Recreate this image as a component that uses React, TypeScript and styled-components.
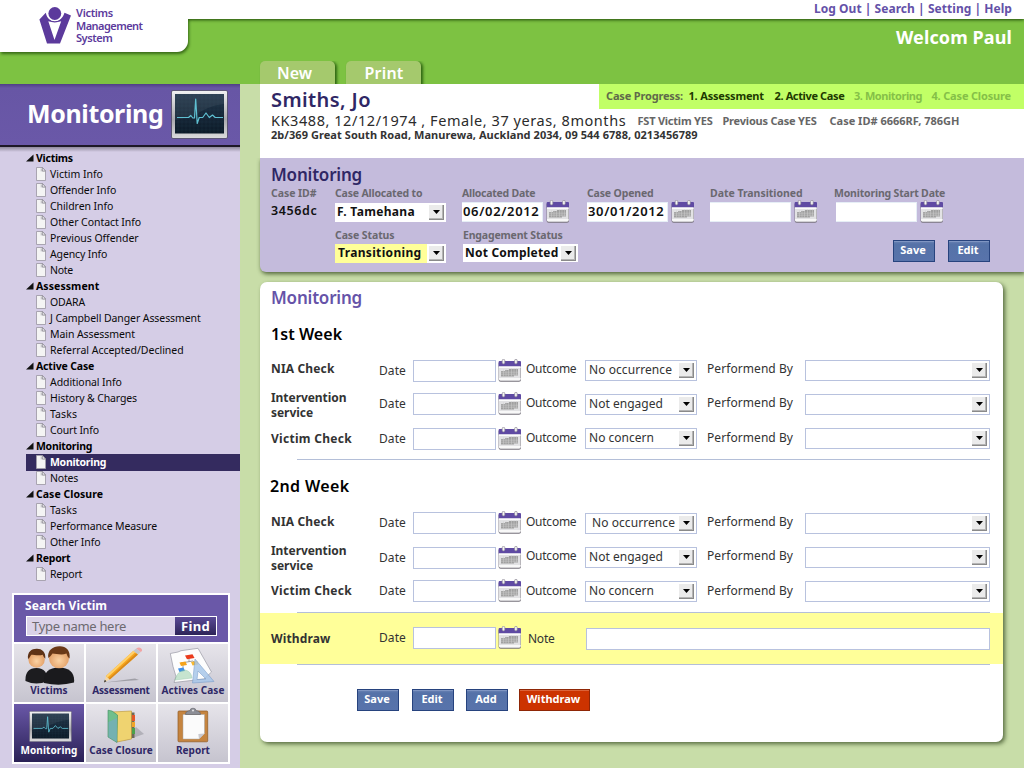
import React from 'react';
import styled, { createGlobalStyle, css } from 'styled-components';

const GlobalStyle = createGlobalStyle`
  * { box-sizing: border-box; }
  body { margin: 0; }
  body, input, button { font-family: "Noto Sans", "Open Sans", sans-serif; }
  p, h1, h2, h3, ul { margin: 0; padding: 0; }
`;

type Spaced = { $ls?: number };
const spacing = css<Spaced>`
  letter-spacing: ${(p) => p.$ls ?? 0}px;
  white-space: nowrap;
`;

/* ---------- page frame ---------- */

const Page = styled.div`
  width: 1024px;
  height: 768px;
  overflow: hidden;
  background: #c8dda8;
  display: flex;
  flex-direction: column;
`;

const Header = styled.header`
  height: 84px;
  flex: none;
  display: flex;
  background: #7dc242;
`;

const LogoPanel = styled.div`
  width: 188px;
  height: 52px;
  background: #fff;
  border-bottom-right-radius: 11px;
  box-shadow: 1px 2px 3px rgba(20, 60, 0, 0.65);
  padding: 7px 0 0 39px;
  display: flex;
  gap: 4px;
`;

const LogoText = styled.div`
  color: #5c3a9c;
  font-size: 11px;
  font-weight: 600;
  line-height: 12.6px;
  display: flex;
  flex-direction: column;
  padding-left: 1px;
`;

const Line = styled.span<Spaced>`
  ${spacing}
`;

const HeaderMain = styled.div`
  flex: 1;
  display: flex;
  flex-direction: column;
`;

const TopLinks = styled.nav`
  height: 19px;
  background: #fff;
  box-shadow: 0 1px 3px rgba(20, 60, 0, 0.9);
  clip-path: inset(0 0 -6px 0);
  color: #6451a8;
  font-size: 12px;
  font-weight: 700;
  line-height: 17px;
  letter-spacing: 0.04px;
  text-align: right;
  padding-right: 12px;
  white-space: pre;
`;

const Welcome = styled.div`
  height: 42px;
  line-height: 37px;
  padding-right: 12px;
  text-align: right;
  color: #fff;
  font-size: 18px;
  font-weight: 700;
  letter-spacing: 0.1px;
`;

const Tabs = styled.div`
  display: flex;
  gap: 11px;
  padding-left: 72px;
  height: 23px;
  overflow: hidden;
`;

const Tab = styled.div<Spaced & { $pad: number }>`
  width: 75px;
  height: 26px;
  padding-left: ${(p) => p.$pad}px;
  background: #a5c96d;
  border-radius: 5px 5px 0 0;
  box-shadow: 2px 1px 3px rgba(20, 70, 0, 0.75);
  color: #fff;
  font-size: 16px;
  font-weight: 600;
  line-height: 24px;
  ${spacing}
`;

const Body = styled.div`
  flex: 1;
  display: flex;
  min-height: 0;
`;

/* ---------- sidebar ---------- */

const Sidebar = styled.aside`
  width: 240px;
  flex: none;
  background: #d5cde6;
  display: flex;
  flex-direction: column;
`;

const Banner = styled.div`
  height: 63px;
  display: flex;
  justify-content: space-between;
  padding: 6px 12px 0 27px;
  border-bottom: 2px solid #1d1826;
  background: linear-gradient(#4f3f86 0, #6756a5 4px, #6a58a8 100%);
`;

const BannerTitle = styled.h1`
  color: #fff;
  font-size: 25px;
  font-weight: 700;
  line-height: 46px;
  letter-spacing: -0.38px;
`;

const Nav = styled.nav`
  padding: 3px 0 0 26px;
  flex: 1;
  background: linear-gradient(#8f899c 0, #d5cde6 5px);
`;

const NavHead = styled.div<Spaced>`
  height: 16px;
  display: flex;
  align-items: center;
  gap: 2px;
  font-size: 10.5px;
  font-weight: 700;
  line-height: 16px;
  color: #000;
  ${spacing}
`;

const NavItem = styled.div<Spaced & { $active?: boolean }>`
  height: 16px;
  padding-left: 10px;
  display: flex;
  align-items: center;
  gap: 4px;
  font-size: 10.5px;
  line-height: 16px;
  font-weight: ${(p) => (p.$active ? 700 : 400)};
  color: ${(p) => (p.$active ? '#fff' : '#0a0a0a')};
  box-shadow: ${(p) => (p.$active ? '0 1px 0 #342b5f' : 'none')};
  background: ${(p) => (p.$active ? '#342b5f' : 'transparent')};
  ${spacing}
`;

const Dock = styled.section`
  width: 218px;
  height: 171px;
  margin: 0 0 4px 12px;
  padding: 2px;
  background: #fff;
  display: grid;
  grid-template-columns: repeat(3, 70px);
  grid-template-rows: 47px 58px 58px;
  gap: 2px;
`;

const SearchPanel = styled.div`
  grid-column: 1 / -1;
  background: #6a58a8;
  padding: 3px 11px 0 11px;
`;

const SearchTitle = styled.div`
  color: #fff;
  font-size: 12px;
  font-weight: 700;
  line-height: 15px;
  height: 18px;
  letter-spacing: 0.06px;
`;

const SearchBox = styled.div`
  display: flex;
  height: 20px;
  border: 1px solid #fff;
  background: #dbd3e9;
  margin-left: 1px;
`;

const SearchHint = styled.span`
  flex: 1;
  padding-left: 5px;
  color: #6d6a70;
  font-size: 13px;
  line-height: 18px;
  letter-spacing: -0.31px;
`;

const FindButton = styled.span`
  width: 41px;
  padding-left: 6px;
  background: linear-gradient(#5a4a96, #2d2458);
  color: #fff;
  font-size: 13px;
  font-weight: 700;
  line-height: 19px;
  letter-spacing: 0.33px;
`;

const DockCell = styled.div<{ $active?: boolean }>`
  display: flex;
  flex-direction: column;
  background: ${(p) => (p.$active ? 'linear-gradient(#6a58a8, #2a2156)' : 'linear-gradient(#e6e4ea, #c6c4cf)')};
  color: ${(p) => (p.$active ? '#fff' : '#2f2866')};
`;

const DockLabel = styled.span<Spaced>`
  margin-top: -1px;
  font-size: 10px;
  font-weight: 700;
  line-height: 12px;
  text-align: center;
  ${spacing}
`;

/* ---------- main column ---------- */

const Main = styled.main`
  flex: 1;
  min-width: 0;
  padding-left: 20px;
  display: flex;
  flex-direction: column;
`;

const Client = styled.section`
  height: 74px;
  background: #fff;
  padding-left: 11px;
`;

const ClientTop = styled.div`
  display: flex;
  justify-content: space-between;
  height: 28px;
`;

const ClientName = styled.h2`
  margin-top: 4px;
  color: #2f2765;
  font-size: 20px;
  font-weight: 600;
  line-height: 24px;
  letter-spacing: 0.4px;
`;

const Progress = styled.div`
  width: 425px;
  height: 25px;
  display: grid;
  grid-template-columns: 82.5px 86px 79.5px 77.5px auto;
  padding-left: 7px;
  background: #c1ff66;
  font-size: 11px;
  font-weight: 700;
  line-height: 24px;
`;

const Step = styled.span<Spaced & { $tone: 'label' | 'done' | 'todo' }>`
  color: ${(p) => ({ label: '#5f6a4a', done: '#1d3a00', todo: '#85bf48' }[p.$tone])};
  ${spacing}
`;

const ClientFacts = styled.div`
  display: flex;
  height: 16px;
  line-height: 16px;
`;

const FactMain = styled.span`
  width: 366.5px;
  font-size: 14.5px;
  color: #2b2b2b;
  letter-spacing: 0.56px;
  white-space: pre;
`;

const Fact = styled.span<Spaced & { $w: number }>`
  width: ${(p) => p.$w}px;
  font-size: 11px;
  font-weight: 700;
  line-height: 18px;
  color: #666;
  ${spacing}
`;

const Address = styled.div`
  font-size: 11px;
  font-weight: 700;
  line-height: 14px;
  color: #333;
  letter-spacing: 0.06px;
  white-space: nowrap;
`;

const CasePanel = styled.section`
  height: 114px;
  flex: none;
  padding: 8px 0 0 11px;
  background: #c4bbdc;
  border-bottom-left-radius: 6px;
  box-shadow: 1px 2px 4px rgba(50, 70, 30, 0.8);
  clip-path: inset(0 0 -8px -8px);
`;

const PanelTitle = styled.h2<{ $color: string }>`
  color: ${(p) => p.$color};
  font-size: 17px;
  font-weight: 600;
  line-height: 18px;
  letter-spacing: -0.2px;
`;

const CaseRow = styled.div`
  display: grid;
  grid-template-columns: 64px 127px 125px 123px 124px 1fr;
  height: 42px;
  margin-top: 2px;
  & + & { margin-top: 0; }
`;

const CaseActions = styled.div`
  grid-column: 4 / -1;
  justify-self: end;
  display: flex;
  gap: 13px;
  padding: 12px 34px 0 0;
`;

const Field = styled.div<{ $shift?: number }>`
  padding-left: ${(p) => p.$shift ?? 0}px;
`;

const FieldLabel = styled.div<Spaced>`
  height: 16px;
  font-size: 10.5px;
  font-weight: 700;
  line-height: 14px;
  color: #6a6870;
  ${spacing}
`;

const CaseId = styled.div`
  font-size: 12.5px;
  font-weight: 600;
  line-height: 17px;
  letter-spacing: 0.6px;
  color: #111;
`;

const DateBox = styled.div<{ $indent?: number }>`
  display: flex;
  gap: 3px;
  padding-left: ${(p) => p.$indent ?? 0}px;
`;

const DateValue = styled.div`
  width: 81px;
  height: 20px;
  padding-left: 1px;
  background: #fff;
  border: 1px solid #e6eef6;
  border-left-width: 0;
  font-size: 13px;
  font-weight: 600;
  line-height: 17px;
  letter-spacing: 0.66px;
  white-space: nowrap;
  color: #111;
`;

const CaseSelect = styled.div<Spaced & { $w: number; $bg?: string; $top?: number; $pad?: number; $h?: number }>`
  width: ${(p) => p.$w}px;
  height: ${(p) => p.$h ?? 19}px;
  margin-top: ${(p) => p.$top ?? 0}px;
  padding: 0 2px 0 ${(p) => p.$pad ?? 2}px;
  display: flex;
  justify-content: space-between;
  align-items: center;
  background: linear-gradient(90deg, ${(p) => p.$bg ?? '#fff'} 92px, #fff 92px);
  font-size: 12px;
  font-weight: 700;
  line-height: 16px;
  color: #111;
  ${spacing}
  & > span:first-child { margin-top: -1px; }
`;

const ArrowBox = styled.span`
  width: 15px;
  height: 15px;
  flex: none;
  display: flex;
  align-items: center;
  justify-content: center;
  background: #ebebeb;
  border: solid #8a8a8a;
  border-width: 0 1px 1px 0;
  box-shadow: inset -1px -1px 0 #b5b5b5;
`;

const Button = styled.button<Spaced & { $w?: number; $danger?: boolean }>`
  width: ${(p) => p.$w ?? 42}px;
  height: 22px;
  padding: 0 2px 2px 0;
  border: 1px solid ${(p) => (p.$danger ? '#8f2606' : '#27437e')};
  background: ${(p) => (p.$danger ? '#cc3300' : 'linear-gradient(#6c84b5, #5572a8 3px, #5873ab)')};
  box-shadow: inset 0 1px 0 ${(p) => (p.$danger ? '#dc6238' : '#7f95c2')};
  color: #fff;
  font-size: 11px;
  font-weight: 700;
  line-height: 18px;
  ${spacing}
`;

/* ---------- monitoring card ---------- */

const Card = styled.section`
  width: 743px;
  height: 460px;
  margin-top: 10px;
  padding-top: 6px;
  background: #fff;
  border-radius: 7px;
  box-shadow: 2px 2px 4px rgba(50, 70, 30, 0.75);
`;

const CardTitle = styled(PanelTitle)`
  padding-left: 11px;
  line-height: 19px;
`;

const WeekTitle = styled.h3<Spaced & { $left?: number; $gap?: number }>`
  margin: ${(p) => p.$gap ?? 17}px 0 16px;
  padding-left: ${(p) => p.$left ?? 11}px;
  height: 19px;
  font-size: 16px;
  font-weight: 600;
  line-height: 19px;
  color: #000;
  ${spacing}
`;

const CheckRow = styled.div<{ $h: number }>`
  height: ${(p) => p.$h}px;
  padding-left: 11px;
  display: grid;
  grid-template-columns: 108px 34px 85px 28px 59px 122px 98px 185px;
  align-items: start;
`;

const WithdrawRow = styled(CheckRow)`
  padding-top: 14px;
  grid-template-columns: 108px 34px 85px 30px 58px 404px;
  background: #ffff99;
`;

const Divider = styled.hr`
  width: 693px;
  height: 1px;
  margin: 0 0 0 37px;
  border: 0;
  background: #b4bfd8;
`;

const RowLabel = styled.div<Spaced & { $cy?: number; $lift?: number }>`
  margin-top: ${(p) => -(p.$lift ?? 0)}px;
  font-size: 12px;
  font-weight: 700;
  line-height: ${(p) => (p.$cy ? p.$cy * 2 : 15)}px;
  color: #333;
  display: flex;
  flex-direction: column;
  ${spacing}
`;

const CellText = styled.span<Spaced & { $cy: number }>`
  font-size: 12px;
  line-height: ${(p) => p.$cy * 2}px;
  height: 22px;
  color: #333;
  ${spacing}
`;

const TextBox = styled.div<{ $w: number; $top?: number }>`
  width: ${(p) => p.$w}px;
  height: 22px;
  margin-top: ${(p) => p.$top ?? 0}px;
  border: 1px solid #b8c2de;
  background: #fff;
`;

const Select = styled.div<Spaced & { $w: number; $top?: number; $cy?: number; $pad?: number }>`
  width: ${(p) => p.$w}px;
  height: 21px;
  margin-top: ${(p) => p.$top ?? 0}px;
  padding: 0 2px 2px ${(p) => p.$pad ?? 3}px;
  display: flex;
  justify-content: space-between;
  align-items: flex-end;
  border: 1px solid #b8c2de;
  background: #fff;
  font-size: 12px;
  color: #333;
  ${spacing}
  & > span:first-child {
    align-self: flex-start;
    line-height: ${(p) => ((p.$cy ?? 9) - 1) * 2}px;
  }
`;

const CardActions = styled.div`
  display: flex;
  padding: 24px 0 0 97px;
  & > :nth-child(2) { margin-left: 13px; }
  & > :nth-child(3) { margin-left: 12px; }
  & > :nth-child(4) { margin-left: 11px; }
`;

/* ---------- drawings ---------- */

const CalendarSvg = styled.svg<{ $lift?: number }>`
  display: block;
  flex: none;
  margin-top: ${(p) => -(p.$lift ?? 1)}px;
`;

const Calendar = ({ lift }: { lift?: number }) => (
  <CalendarSvg $lift={lift} width="24" height="24" viewBox="0 0.6 24 24">
    <rect x="0.6" y="3" width="22.4" height="20.4" rx="2" fill="#77737c" />
    <rect x="1" y="3" width="21.6" height="19" rx="1.6" fill="#e2e2e4" />
    <path d="M1 19.500h21.600v1q0 1.600-1.600 1.600H2.600Q1 22.100 1 20.500z" fill="#f8f8f8" />
    <path d="M.6 3.500q0-1 1-1h20.400q1 0 1 1V8H.6z" fill="#5f4aa3" />
    <rect x="1" y="8" width="21.600" height="1.600" fill="#fbfbfb" />
    <path d="M3 12.500h4v-.8h4v-1h9v6.500h-4v1H3z" fill="#a0a0a0" />
    <path d="M3 13.800h17M3 15.800h17M5.500 11v7M8 11v7M10.500 11v7M13.500 10v8M16 10v7M18.500 10v7" stroke="#cfcfcf" strokeWidth=".5" />
    <rect x="4.200" y=".9" width="2.600" height="4.600" rx="1.300" fill="#f4f4f4" stroke="#8b8694" strokeWidth=".7" />
    <rect x="16.600" y=".9" width="2.600" height="4.600" rx="1.300" fill="#f4f4f4" stroke="#8b8694" strokeWidth=".7" />
  </CalendarSvg>
);

const Arrow = () => (
  <ArrowBox>
    <svg width="7" height="4" viewBox="0 0 7 4"><path d="M0 0h7L3.500 4z" fill="#000" /></svg>
  </ArrowBox>
);

const Logo = () => (
  <svg width="32" height="37" viewBox="0 0 32 37">
    <path d="M.4 12.400 6.800 5.800C8 11.500 11 14 15.800 14S23.600 11.500 25.500 5.800L32 8.400 21 36.600H8z" fill="#5c3a9c" />
    <circle cx="15.800" cy="6.600" r="7.600" fill="#fff" />
    <circle cx="15.800" cy="6.500" r="6.400" fill="#5c3a9c" />
    <path d="M9.300 14.300q6.500 2.200 12.900 0L15.500 33z" fill="#fff" />
  </svg>
);

const Monitor = ({ w, h }: { w: number; h: number }) => (
  <svg width={w} height={h} viewBox="0 0 57 49" preserveAspectRatio="none">
    <defs>
      <linearGradient id="bezel" x2="0" y2="1"><stop stopColor="#f2f2f2" /><stop offset=".6" stopColor="#a9a9ad" /><stop offset="1" stopColor="#dcdcde" /></linearGradient>
      <linearGradient id="screen" x2="0" y2="1"><stop stopColor="#22364a" /><stop offset="1" stopColor="#0c1a28" /></linearGradient>
    </defs>
    <rect x=".5" y=".5" width="56" height="48" rx="1.500" fill="url(#bezel)" stroke="#4a4562" strokeWidth=".8" />
    <rect x="4" y="4" width="49" height="39.500" fill="url(#screen)" />
    <path d="M7 4v39M11 4v39M15 4v39M19 4v39M23 4v39M27 4v39M31 4v39M35 4v39M39 4v39M43 4v39M47 4v39M51 4v39M4 8h49M4 12h49M4 16h49M4 20h49M4 24h49M4 28h49M4 32h49M4 36h49M4 40h49" stroke="#3b5b70" strokeWidth=".3" opacity=".4" />
    <path d="M4 4h49v10Q35 16 22 27L4 30z" fill="#fff" opacity=".06" />
    <path d="M6 27.500h11.500l2.300-2 2 2.500h1.700L24.700 9l1.500 24.500 2-6h3.500L35 23l3.300 4.500 3.200-2.500 2.700 2.500H52" fill="none" stroke="#5fc0d2" strokeWidth="1.200" strokeLinejoin="round" />
  </svg>
);

const FileIcon = () => (
  <svg width="10" height="14" viewBox="0 0 10 14">
    <path d="M.5.5h6l3 3.500v9.500h-9z" fill="#f4f4f4" stroke="#a19daa" strokeWidth=".9" />
    <path d="M4.500 1v3.500H9z" fill="#d2d2d5" />
    <path d="M6.300.5V4h3.200z" fill="#fff" stroke="#85828b" strokeWidth=".8" />
  </svg>
);

const Corner = () => (
  <svg width="8" height="8" viewBox="0 0 8 8"><path d="M7.500.5v7H0z" fill="#111" /></svg>
);

const Art = styled.svg`
  display: block;
  width: 70px;
  height: 41px;
  flex: none;
`;

const PeopleArt = () => (
  <Art viewBox="0 0 70 41">
    <defs>
      <radialGradient id="skin" cx=".5" cy=".6"><stop stopColor="#fbd3a4" /><stop offset="1" stopColor="#e3a169" /></radialGradient>
    </defs>
    <path d="M11.500 37c-.5-8 3-13 11-13s11 5 11 13q-11 5-22 0z" fill="#1c1c1f" />
    <ellipse cx="22.600" cy="15.500" rx="8.200" ry="8.300" fill="url(#skin)" />
    <path d="M14 15C13 7.500 18 4.500 23 4.700c5 0 9 3.300 8.300 10-1.500-1-2-3-2.500-4-4 1.500-9 0-11.500 0-1 1.300-1.700 3.300-3.300 4.300z" fill="#5d3216" />
    <path d="M30 39c-1-9.500 4-15.500 15-15.500S61 29.500 60 38.500q-14 4-30 .5z" fill="#1a1a1d" />
    <ellipse cx="45" cy="14.500" rx="10" ry="9.800" fill="url(#skin)" />
    <path d="M34.300 14C33 6 39.500 2 46 2.300c6 0 10.500 4 9.600 12.200-1.800-1-2.600-3.500-3.100-5-5 2-10.500 0-14 0-1.200 1.500-2.400 3.500-4.200 4.500z" fill="#6a3917" />
  </Art>
);

const PencilArt = () => (
  <Art viewBox="0 0 70 41">
    <path d="M19 38.500 53 36l-4-1.500z" fill="#77767c" opacity=".55" />
    <path d="M18 38.500l2-6.500 3.800 3.500z" fill="#f3d7a6" />
    <path d="M18 38.500l.8-2.700 1.600 1.500z" fill="#222" />
    <path d="M20 32 47.500 6.800l4.500 3.700-28.200 25z" fill="#f6a51c" />
    <path d="M20 32 47.500 6.800l1.700 1.400L21.500 33.500z" fill="#ffd069" />
    <path d="M22.700 34.500 50.500 9.300l1.500 1.200-28.200 25z" fill="#d98a1c" />
    <path d="M47.500 6.800l2.700-2.400 4.500 3.700-2.700 2.400z" fill="#c3c7cd" />
    <path d="M50.200 4.400q2.800-2 5 0 2 2-.5 3.700z" fill="#f1a4a4" />
  </Art>
);

const PlansArt = () => (
  <Art viewBox="0 0 70 41">
    <path d="M12.300 9.500 20 8l3-1.300L40 4.300 53.500 28 46 35l-30 3.500 2-6-3-10z" fill="#fdfdfd" stroke="#9a9aa5" strokeWidth=".7" />
    <path d="M31 14v4M23 19l12-2 3 3M25 24v-4" stroke="#8a8a8a" fill="none" strokeWidth=".8" />
    <path d="M27 11.500l7.500-1.300 2 3.800-7.500 1.300z" fill="#ea3b1c" />
    <path d="M21.500 18.500l6-1 1.500 3.500-6 1z" fill="#f5a31a" />
    <path d="M33 18l6-1 1.500 3.500-6 1z" fill="#f7b930" />
    <path d="M20 24.500l5.500-1 1.500 3.500-5.500 1z" fill="#3f8fe8" />
    <path d="M17 36q2-9 10-10 6 1 7 8z" fill="#a9d8b8" opacity=".65" stroke="#73b58b" strokeWidth=".5" />
    <path d="M37 15 56 37.500 34.500 39zM40 27l-1 8.500 9-.5z" fill="#a9c7ea" fillRule="evenodd" opacity=".85" stroke="#6d95c8" strokeWidth=".6" />
  </Art>
);

const FolderArt = () => (
  <Art viewBox="0 0 70 41">
    <path d="M38 37l20-7-8-7z" fill="#6f6f78" opacity=".35" />
    <path d="M44 8.500h4.500V34H44z" fill="#6b6b5b" />
    <path d="M46 11h3v6h-3z" fill="#e4572a" /><path d="M46 18h3v5h-3z" fill="#f0a52a" /><path d="M46 24h3v6h-3z" fill="#4ba14b" />
    <path d="M26 8 45.500 7v28L31 38z" fill="#efd370" stroke="#b99432" strokeWidth=".6" />
    <path d="M22 6.200 26 7l5.500 4L31 38.500l-9-5.500z" fill="#6fbf8c" stroke="#3d8b62" strokeWidth=".6" />
    <path d="M22.500 18 31 14v24l-8.500-5z" fill="#78a9c9" opacity=".6" />
  </Art>
);

const ClipboardArt = () => (
  <Art viewBox="0 0 70 41">
    <rect x="20" y="7" width="29.700" height="30.800" rx="1" fill="#c5843f" stroke="#8f5a23" strokeWidth=".7" />
    <path d="M25 10.500h21.500v19L41 35H25z" fill="#fbfbfb" stroke="#a5a5a5" strokeWidth=".5" />
    <path d="M46.500 29.500 41 35l-.7-5z" fill="#c9c9cf" />
    <path d="M27.500 10.500q0-3.500 4.500-3.800 0-2.500 3-2.500t3 2.500q4.500.3 4.500 3.800z" fill="#8c8e96" stroke="#5e6068" strokeWidth=".6" />
    <circle cx="35" cy="6.600" r="1" fill="#e5e5e8" />
  </Art>
);

const MonitorArtBox = styled.div`
  height: 41px;
  padding: 7px 0 0 15px;
`;

/* ---------- data ---------- */

type NavEntry = { head?: boolean; text: string; ls: number; active?: boolean };
const navEntries: NavEntry[] = [
  { head: true, text: 'Victims', ls: -0.25 },
  { text: 'Victim Info', ls: -0.02 },
  { text: 'Offender Info', ls: -0.08 },
  { text: 'Children Info', ls: -0.08 },
  { text: 'Other Contact Info', ls: -0.06 },
  { text: 'Previous Offender', ls: -0.05 },
  { text: 'Agency Info', ls: -0.14 },
  { text: 'Note', ls: -0.3 },
  { head: true, text: 'Assessment', ls: 0.08 },
  { text: 'ODARA', ls: -0.1 },
  { text: 'J Campbell Danger Assessment', ls: -0.09 },
  { text: 'Main Assessment', ls: -0.08 },
  { text: 'Referral Accepted/Declined', ls: -0.01 },
  { head: true, text: 'Active Case', ls: -0.16 },
  { text: 'Additional Info', ls: -0.08 },
  { text: 'History & Charges', ls: -0.13 },
  { text: 'Tasks', ls: 0.1 },
  { text: 'Court Info', ls: -0.15 },
  { head: true, text: 'Monitoring', ls: -0.28 },
  { text: 'Monitoring', ls: -0.28, active: true },
  { text: 'Notes', ls: -0.2 },
  { head: true, text: 'Case Closure', ls: 0.04 },
  { text: 'Tasks', ls: 0.1 },
  { text: 'Performance Measure', ls: -0.14 },
  { text: 'Other Info', ls: -0.1 },
  { head: true, text: 'Report', ls: -0.2 },
  { text: 'Report', ls: -0.22 },
];

type Check = {
  label: string[]; labelLs: number; labelCy?: number; labelLift?: number;
  h: number; dateCy: number; outcomeCy: number;
  outcome: string; outcomeLs: number; selectTop: number; selectCy: number; selectPad?: number;
};

const week1: Check[] = [
  { label: ['NIA Check'], labelLs: 0.15, labelCy: 9, h: 33, dateCy: 11, outcomeCy: 9, outcome: 'No occurrence', outcomeLs: 0.07, selectTop: 0, selectCy: 9.5 },
  { label: ['Intervention', 'service'], labelLs: -0.05, labelLift: 3, h: 35, dateCy: 10.5, outcomeCy: 10, outcome: 'Not engaged', outcomeLs: 0.03, selectTop: 1, selectCy: 9.5 },
  { label: ['Victim Check'], labelLs: 0.29, labelCy: 10.5, h: 31, dateCy: 10.5, outcomeCy: 10, outcome: 'No concern', outcomeLs: 0.02, selectTop: 0, selectCy: 10 },
];
const week2: Check[] = [
  { label: ['NIA Check'], labelLs: 0.15, labelCy: 10, h: 35, dateCy: 11, outcomeCy: 10, outcome: 'No occurrence', outcomeLs: 0.07, selectTop: 1, selectCy: 9.5, selectPad: 6 },
  { label: ['Intervention', 'service'], labelLs: -0.05, labelLift: 4, h: 33, dateCy: 11, outcomeCy: 9, outcome: 'Not engaged', outcomeLs: 0.03, selectTop: 0, selectCy: 9.5 },
  { label: ['Victim Check'], labelLs: 0.29, labelCy: 11, h: 32, dateCy: 11, outcomeCy: 11, outcome: 'No concern', outcomeLs: 0.02, selectTop: 1, selectCy: 10 },
];

const Checks = ({ rows }: { rows: Check[] }) => (
  <>
    {rows.map((r) => (
      <CheckRow key={r.label[0]} $h={r.h}>
        <RowLabel $ls={r.labelLs} $cy={r.labelCy} $lift={r.labelLift}>
          {r.label.map((l) => <span key={l}>{l}</span>)}
        </RowLabel>
        <CellText $cy={r.dateCy} $ls={0.1}>Date</CellText>
        <TextBox $w={83} />
        <Calendar />
        <CellText $cy={r.outcomeCy} $ls={-0.25}>Outcome</CellText>
        <Select $w={112} $top={r.selectTop} $cy={r.selectCy} $pad={r.selectPad} $ls={r.outcomeLs}>
          <span>{r.outcome}</span><Arrow />
        </Select>
        <CellText $cy={r.outcomeCy} $ls={0.07}>Performend By</CellText>
        <Select $w={185} $top={r.selectTop}><span /><Arrow /></Select>
      </CheckRow>
    ))}
  </>
);

const DateField = ({ label, ls, value, indent }: { label: string; ls: number; value?: string; indent?: number }) => (
  <Field>
    <FieldLabel $ls={ls}>{label}</FieldLabel>
    <DateBox $indent={indent}><DateValue>{value}</DateValue><Calendar lift={2} /></DateBox>
  </Field>
);

export default function App() {
  return (
    <Page>
      <GlobalStyle />
      <Header>
        <LogoPanel>
          <Logo />
          <LogoText>
            <Line $ls={-0.31}>Victims</Line>
            <Line $ls={-0.55}>Management</Line>
            <Line $ls={-0.45}>System</Line>
          </LogoText>
        </LogoPanel>
        <HeaderMain>
          <TopLinks>Log Out | Search | Setting | Help</TopLinks>
          <Welcome>Welcom Paul</Welcome>
          <Tabs>
            <Tab $pad={17} $ls={0.05}>New</Tab>
            <Tab $pad={18.5} $ls={0.2}>Print</Tab>
          </Tabs>
        </HeaderMain>
      </Header>
      <Body>
        <Sidebar>
          <Banner>
            <BannerTitle>Monitoring</BannerTitle>
            <Monitor w={57} h={49} />
          </Banner>
          <Nav>
            {navEntries.map((n, i) =>
              n.head ? (
                <NavHead key={i} $ls={n.ls}><Corner />{n.text}</NavHead>
              ) : (
                <NavItem key={i} $ls={n.ls} $active={n.active}><FileIcon />{n.text}</NavItem>
              )
            )}
          </Nav>
          <Dock>
            <SearchPanel>
              <SearchTitle>Search Victim</SearchTitle>
              <SearchBox><SearchHint>Type name here</SearchHint><FindButton>Find</FindButton></SearchBox>
            </SearchPanel>
            <DockCell><PeopleArt /><DockLabel $ls={0.1}>Victims</DockLabel></DockCell>
            <DockCell><PencilArt /><DockLabel $ls={-0.22}>Assessment</DockLabel></DockCell>
            <DockCell><PlansArt /><DockLabel $ls={0.07}>Actives Case</DockLabel></DockCell>
            <DockCell $active><MonitorArtBox><Monitor w={43} h={31} /></MonitorArtBox><DockLabel $ls={0.1}>Monitoring</DockLabel></DockCell>
            <DockCell><FolderArt /><DockLabel $ls={0.01}>Case Closure</DockLabel></DockCell>
            <DockCell><ClipboardArt /><DockLabel $ls={0}>Report</DockLabel></DockCell>
          </Dock>
        </Sidebar>
        <Main>
          <Client>
            <ClientTop>
              <ClientName>Smiths, Jo</ClientName>
              <Progress>
                <Step $tone="label" $ls={-0.17}>Case Progress:</Step>
                <Step $tone="done" $ls={-0.18}>1. Assessment</Step>
                <Step $tone="done" $ls={-0.37}>2. Active Case</Step>
                <Step $tone="todo" $ls={-0.45}>3. Monitoring</Step>
                <Step $tone="todo" $ls={-0.17}>4. Case Closure</Step>
              </Progress>
            </ClientTop>
            <ClientFacts>
              <FactMain>KK3488, 12/12/1974 , Female, 37 yeras, 8months</FactMain>
              <Fact $w={85} $ls={-0.23}>FST Victim YES</Fact>
              <Fact $w={107} $ls={-0.21}>Previous Case YES</Fact>
              <Fact $w={140}>Case ID# 6666RF, 786GH</Fact>
            </ClientFacts>
            <Address>2b/369 Great South Road, Manurewa, Auckland 2034, 09 544 6788, 0213456789</Address>
          </Client>
          <CasePanel>
            <PanelTitle $color="#2f2765">Monitoring</PanelTitle>
            <CaseRow>
              <Field><FieldLabel $ls={-0.05}>Case ID#</FieldLabel><CaseId>3456dc</CaseId></Field>
              <Field>
                <FieldLabel $ls={-0.18}>Case Allocated to</FieldLabel>
                <CaseSelect $w={111} $top={1} $ls={0.33}><span>F. Tamehana</span><Arrow /></CaseSelect>
              </Field>
              <DateField label="Allocated Date" ls={-0.25} value="06/02/2012" />
              <DateField label="Case Opened" ls={-0.15} value="30/01/2012" />
              <DateField label="Date Transitioned" ls={-0.03} />
              <DateField label="Monitoring Start Date" ls={-0.18} indent={2} />
            </CaseRow>
            <CaseRow>
              <Field />
              <Field>
                <FieldLabel $ls={-0.1}>Case Status</FieldLabel>
                <CaseSelect $w={111} $bg="#ffff99" $pad={3} $ls={0.34}><span>Transitioning</span><Arrow /></CaseSelect>
              </Field>
              <Field $shift={1}>
                <FieldLabel $ls={-0.17}>Engagement Status</FieldLabel>
                <CaseSelect $w={115} $h={18} $ls={0.21}><span>Not Completed</span><Arrow /></CaseSelect>
              </Field>
              <CaseActions>
                <Button>Save</Button>
                <Button>Edit</Button>
              </CaseActions>
            </CaseRow>
          </CasePanel>
          <Card>
            <CardTitle $color="#6653a8">Monitoring</CardTitle>
            <WeekTitle $gap={18} $ls={0.05}>1st Week</WeekTitle>
            <Checks rows={week1} />
            <Divider />
            <WeekTitle $ls={0.35} $left={10}>2nd Week</WeekTitle>
            <Checks rows={week2} />
            <Divider />
            <WithdrawRow $h={51}>
              <RowLabel $ls={0.14} $cy={11.5}>Withdraw</RowLabel>
              <CellText $cy={11} $ls={0.1}>Date</CellText>
              <TextBox $w={83} />
              <Calendar />
              <CellText $cy={11.5} $ls={-0.25}>Note</CellText>
              <TextBox $w={404} $top={1} />
            </WithdrawRow>
            <Divider />
            <CardActions>
              <Button>Save</Button>
              <Button>Edit</Button>
              <Button>Add</Button>
              <Button $w={71} $danger>Withdraw</Button>
            </CardActions>
          </Card>
        </Main>
      </Body>
    </Page>
  );
}
